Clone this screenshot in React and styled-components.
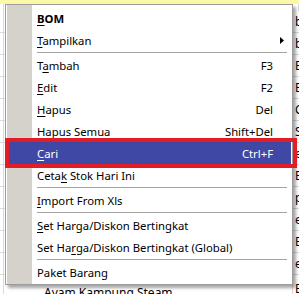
import React from "react";
import styled, { createGlobalStyle } from "styled-components";

const GlobalStyle = createGlobalStyle`
  html, body { margin: 0; padding: 0; background: #fff; }
`;

const Screen = styled.div`
  position: relative;
  width: 299px;
  height: 294px;
  overflow: hidden;
  background: #fff;
  font-family: "Noto Sans", "Open Sans", sans-serif;
  font-size: 11.3px;
  color: #000;
`;

const HeaderBand = styled.div`
  height: 4px;
  background: #fcf9a6;
`;

const Row = styled.div`
  display: grid;
  grid-template-columns: 4px 289px 1fr;
  height: ${p => p.$h || 22}px;
  box-sizing: border-box;
  border-bottom: ${p => (p.$h ? "none" : "1px solid #d9d9d9")};
`;

const Cell = styled.div`
  box-sizing: border-box;
  border-right: 1px solid #d9d9d9;
  white-space: nowrap;
  display: flex;
  align-items: center;
  padding-left: 2px;
  font-size: 12px;
`;

const NameCell = styled(Cell)`
  align-items: flex-start;
  padding: 9px 0 0 40px;
`;

const Menu = styled.ul`
  position: absolute;
  left: 5px;
  top: 4px;
  width: 288px;
  box-sizing: border-box;
  margin: 0;
  padding: 2px 1px 1px;
  list-style: none;
  border: 1px solid #9c9c9c;
  background: linear-gradient(90deg, #fff 0 1px, #d5d2cc 1px 26px, #fff 26px);
  box-shadow: 3px 3px 3px rgba(0, 0, 0, 0.35);
`;

const Item = styled.li`
  display: flex;
  align-items: center;
  height: 22px;
  padding: 0 18px 0 30px;
  background: ${p => (p.$active ? "#4048a6" : "transparent")};
  color: ${p => (p.$active ? "#fff" : "#000")};
  font-weight: ${p => (p.$bold ? 700 : 400)};
  white-space: nowrap;

  u {
    text-decoration: underline;
    text-underline-offset: 2px;
  }
`;

const Label = styled.span`
  flex: 1;
`;

const Shortcut = styled.span``;

const Arrow = styled.svg`
  margin-right: -11px;
`;

const Separator = styled.li`
  height: 3px;
  padding-top: 1px;
  box-sizing: border-box;
  margin: 0 4px 0 30px;

  &::before {
    content: "";
    display: block;
    height: 1px;
    background: #a3a3a3;
  }
`;

const Callout = styled.div`
  position: absolute;
  left: 5px;
  top: 138px;
  width: 292px;
  height: 30px;
  box-sizing: border-box;
  border: 4px solid #e31d25;
  pointer-events: none;
`;

const rightCol = ["b", "b", "E", "E", "C", "S", "e", "E", "p", "e", "E", "e", "E"];

const menu = [
  { label: "BOM", key: 0, bold: true },
  { label: "Tampilkan", key: 0, sub: true },
  "sep",
  { label: "Tambah", key: 1, shortcut: "F3" },
  { label: "Edit", key: 0, shortcut: "F2" },
  { label: "Hapus", key: 0, shortcut: "Del" },
  { label: "Hapus Semua", key: 2, shortcut: "Shift+Del" },
  { label: "Cari", key: 0, shortcut: "Ctrl+F", active: true },
  { label: "Cetak Stok Hari Ini", key: 4 },
  "sep",
  { label: "Import From Xls", key: 0 },
  "sep",
  { label: "Set Harga/Diskon Bertingkat", key: 0 },
  { label: "Set Harga/Diskon Bertingkat (Global)", key: 6 },
  "sep",
  { label: "Paket Barang", key: 11 },
];

function mnemonic(text, i) {
  return (
    <>
      {text.slice(0, i)}
      <u>{text[i]}</u>
      {text.slice(i + 1)}
    </>
  );
}

export default function App() {
  return (
    <Screen>
      <GlobalStyle />
      <HeaderBand />
      <Row $h={7}>
        <Cell />
        <Cell />
        <Cell />
      </Row>
      {rightCol.map((c, i) => (
        <Row key={i}>
          <Cell />
          {i === rightCol.length - 1 ? <NameCell>Ayam Kampung Steam</NameCell> : <Cell />}
          <Cell>{c}</Cell>
        </Row>
      ))}

      <Menu>
        {menu.map((m, i) =>
          m === "sep" ? (
            <Separator key={i} />
          ) : (
            <Item key={i} $active={m.active} $bold={m.bold}>
              <Label>{mnemonic(m.label, m.key)}</Label>
              {m.shortcut && <Shortcut>{m.shortcut}</Shortcut>}
              {m.sub && (
                <Arrow width="4" height="7" viewBox="0 0 4 7">
                  <polygon points="0,0 4,3.5 0,7" fill="#000" />
                </Arrow>
              )}
            </Item>
          )
        )}
      </Menu>
      <Callout />
    </Screen>
  );
}
